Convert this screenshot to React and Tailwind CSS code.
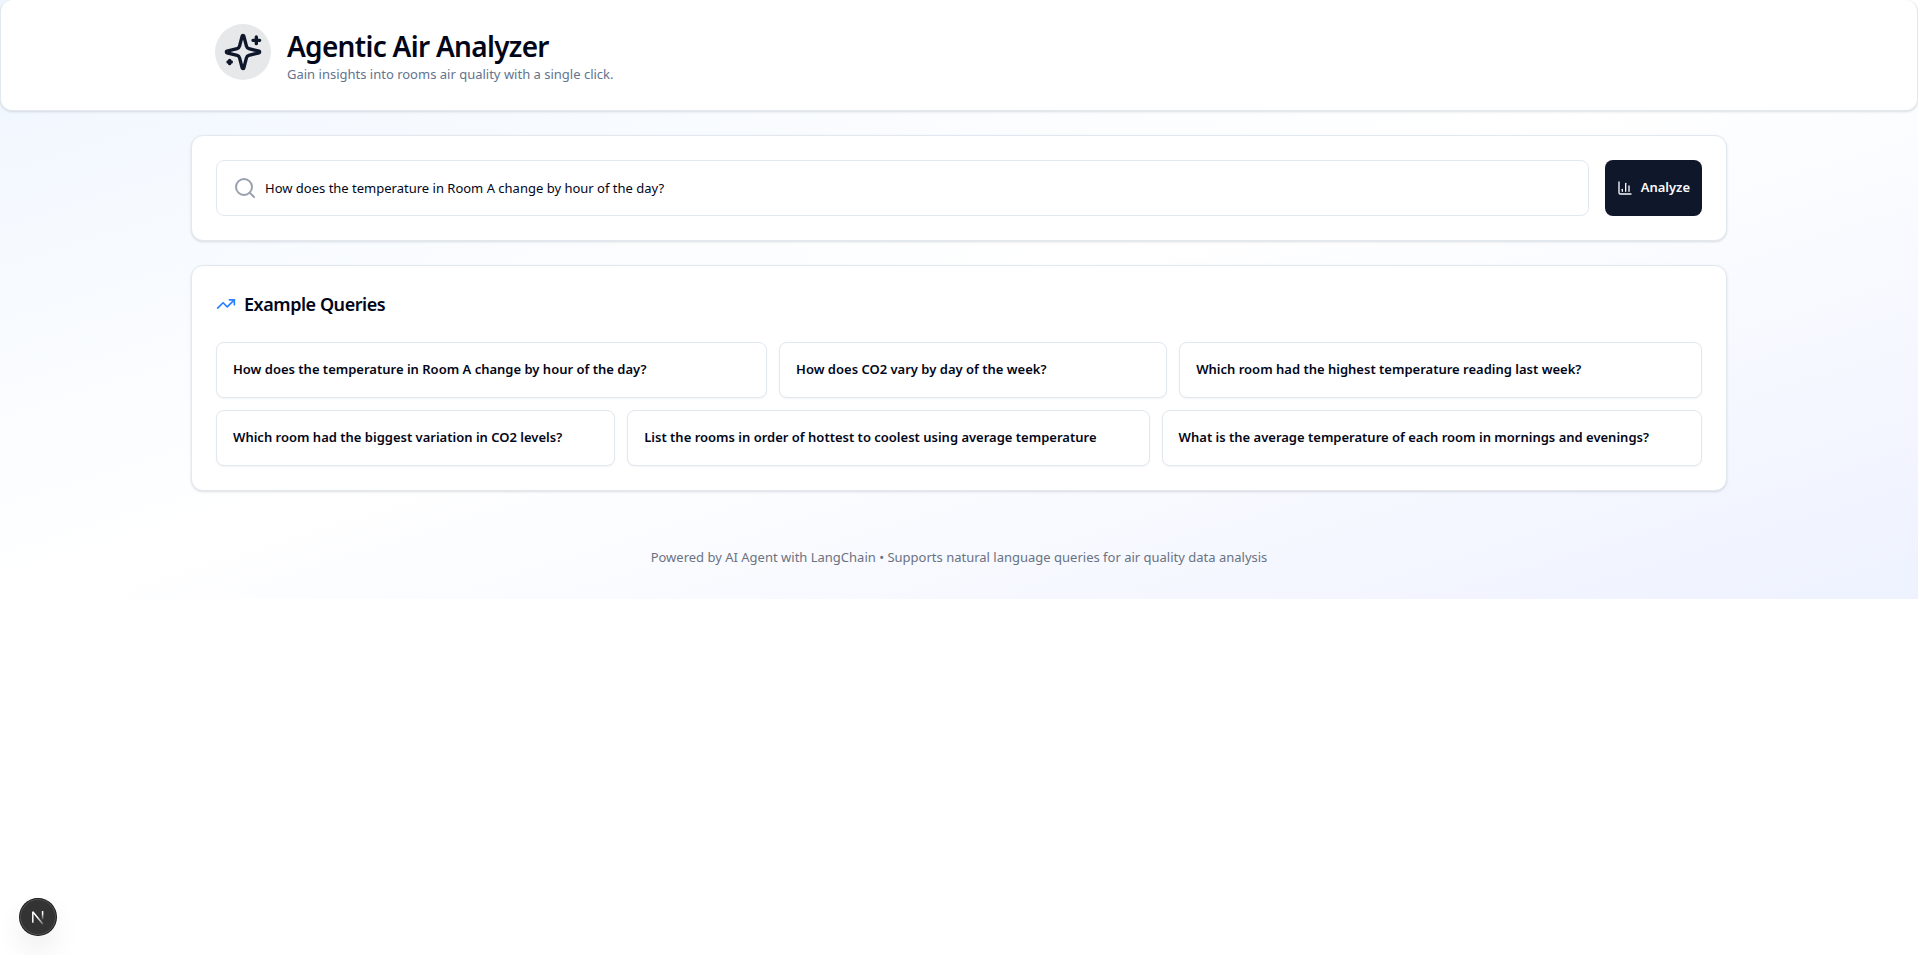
import { useState } from "react";
import { Search, TrendingUp, ChartColumn } from "lucide-react";

const QUERIES = [
  "How does the temperature in Room A change by hour of the day?",
  "How does CO2 vary by day of the week?",
  "Which room had the highest temperature reading last week?",
  "Which room had the biggest variation in CO2 levels?",
  "List the rooms in order of hottest to coolest using average temperature",
  "What is the average temperature of each room in mornings and evenings?",
];

function Card({ children }) {
  return (
    <section className="rounded-xl border border-slate-200 bg-white p-6 shadow">
      {children}
    </section>
  );
}

function SparkleIcon() {
  return (
    <svg
      width="40"
      height="40"
      viewBox="0 0 24 24"
      fill="none"
      stroke="currentColor"
      strokeWidth="2"
      strokeLinecap="round"
      strokeLinejoin="round"
      aria-hidden="true"
    >
      <path d="M9.937 15.5A2 2 0 0 0 8.5 14.063l-6.135-1.582a.5.5 0 0 1 0-.962L8.5 9.936A2 2 0 0 0 9.937 8.5l1.582-6.135a.5.5 0 0 1 .963 0L14.063 8.5A2 2 0 0 0 15.5 9.937l6.135 1.581a.5.5 0 0 1 0 .964L15.5 14.063a2 2 0 0 0-1.437 1.437l-1.582 6.135a.5.5 0 0 1-.963 0z" />
      <path d="M20 3v4M22 5h-4M4 17v2M5 18H3" />
    </svg>
  );
}

function Header() {
  return (
    <header className="rounded-xl border border-t-0 border-slate-200 bg-white shadow">
      <div className="mx-auto flex max-w-[1536px] items-start gap-4 px-6 pt-6 pb-[26px]">
        <div className="flex size-14 shrink-0 items-center justify-center rounded-full bg-[#e7e8ea] text-slate-900">
          <SparkleIcon />
        </div>
        <div className="pt-1">
          <h1 className="text-[28px] leading-9 font-semibold tracking-tight">Agentic Air Analyzer</h1>
          <p className="text-[13px] leading-5 text-slate-500">
            Gain insights into rooms air quality with a single click.
          </p>
        </div>
      </div>
    </header>
  );
}

function DevToolsLogo() {
  return (
    <svg width="36" height="36" viewBox="0 0 36 36" fill="none" strokeWidth="1.5" aria-hidden="true">
      <defs>
        <linearGradient id="stem" x1="0" y1="12" x2="0" y2="21" gradientUnits="userSpaceOnUse">
          <stop offset="0.3" stopColor="white" />
          <stop offset="1" stopColor="white" stopOpacity="0" />
        </linearGradient>
        <linearGradient id="diagonal" x1="18" y1="18" x2="24" y2="26" gradientUnits="userSpaceOnUse">
          <stop stopColor="white" />
          <stop offset="0.85" stopColor="white" stopOpacity="0.3" />
        </linearGradient>
      </defs>
      <path d="M22.6 12v9" stroke="url(#stem)" />
      <path d="M12.8 23.8V12.8L22.8 25" stroke="url(#diagonal)" strokeLinejoin="bevel" />
    </svg>
  );
}

export default function App() {
  const [query, setQuery] = useState(QUERIES[0]);

  return (
    <div className="bg-linear-to-br from-blue-50 via-white to-indigo-50 font-['Noto_Sans',sans-serif] text-slate-950">
      <Header />
      <main className="mx-auto flex max-w-[1536px] flex-col gap-6 pt-6">
        <Card>
          <form className="flex gap-4" onSubmit={(e) => e.preventDefault()}>
            <label className="flex h-14 flex-1 items-center gap-2 rounded-lg border border-slate-200 px-4">
              <Search size={24} className="shrink-0 text-gray-400" aria-hidden="true" />
              <input
                type="text"
                aria-label="Query"
                value={query}
                onChange={(e) => setQuery(e.target.value)}
                className="h-full min-w-0 flex-1 bg-transparent text-[13px] outline-none"
              />
            </label>
            <button
              type="submit"
              className="flex h-14 items-center gap-2 rounded-lg bg-slate-900 px-3 text-[13px] font-semibold text-slate-50"
            >
              <ChartColumn size={16} aria-hidden="true" />
              Analyze
            </button>
          </form>
        </Card>
        <Card>
          <h2 className="flex items-center gap-2 text-lg leading-7 font-semibold tracking-tight">
            <TrendingUp size={20} className="text-blue-500" aria-hidden="true" />
            Example Queries
          </h2>
          <div className="mt-6 flex flex-wrap gap-3">
            {QUERIES.map((text) => (
              <button
                key={text}
                type="button"
                onClick={() => setQuery(text)}
                className="h-14 grow rounded-lg border border-slate-200 bg-white px-4 text-left text-[13px] font-semibold shadow-xs"
              >
                {text}
              </button>
            ))}
          </div>
        </Card>
        <footer className="py-8 text-center text-[13px] leading-5 text-gray-500">
          Powered by AI Agent with LangChain • Supports natural language queries for air quality data analysis
        </footer>
      </main>
      <button
        type="button"
        aria-label="Open Next.js Dev Tools"
        className="fixed bottom-5 left-5 size-9 rounded-full bg-[#333] shadow-[0_0_0_1px_#171717,inset_0_0_0_1px_rgba(255,255,255,0.14),0_16px_32px_-8px_rgba(0,0,0,0.24)]"
      >
        <DevToolsLogo />
      </button>
    </div>
  );
}
